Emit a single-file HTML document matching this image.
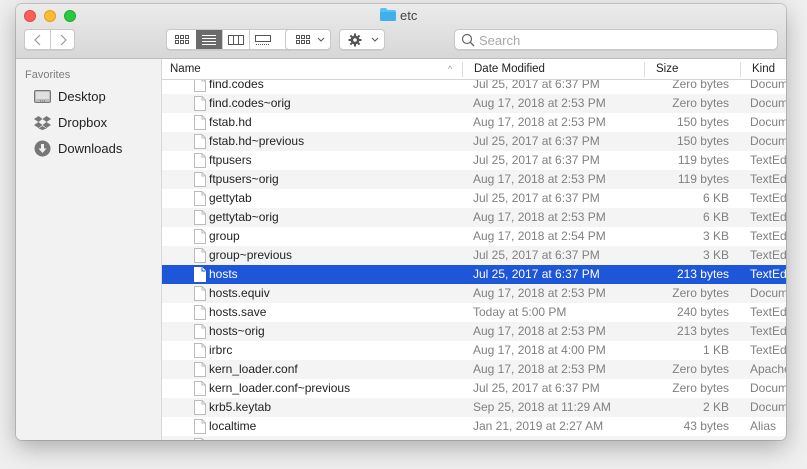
<!DOCTYPE html>
<html><head><meta charset="utf-8"><style>
*{margin:0;padding:0;box-sizing:border-box}
body{width:807px;height:469px;background:#efefef;font-family:"Liberation Sans",sans-serif;position:relative;overflow:hidden}
.win{position:absolute;left:16px;top:4px;width:770px;height:436px;border-radius:6px;background:#fff;overflow:hidden;box-shadow:0 8px 24px rgba(0,0,0,.28),0 0 0 1px rgba(0,0,0,.15)}
.tb{position:absolute;left:0;top:0;width:770px;height:55px;background:linear-gradient(#ebebeb,#d7d7d7);border-bottom:1px solid #bdbdbd}
.dot{position:absolute;top:6px;width:12px;height:12px;border-radius:50%}
.btn{position:absolute;top:25px;height:21px;background:#fff;border:1px solid #c8c8c8;border-radius:4px;box-shadow:0 1px 0 rgba(0,0,0,.05)}
.side{position:absolute;left:0;top:55px;width:146px;height:381px;background:#f2f2f2;border-right:1px solid #d8d8d8}
.side .h{position:absolute;left:9px;top:10px;font-size:11px;color:#7d7d7d}
.side .it{position:absolute;left:18px;font-size:13px;color:#222}
.list{position:absolute;left:146px;top:55px;width:624px;height:381px;overflow:hidden}
.hdr{position:absolute;left:0;top:0;width:624px;height:21px;background:#fff;border-bottom:1px solid #d5d5d5;font-size:11.5px;color:#222;z-index:2}
.hdr span{position:absolute;top:4px}
.hdr i{position:absolute;top:3px;width:1px;height:15px;background:#ddd}
.row{position:absolute;left:0;width:624px;height:19px;font-size:12px;color:#808080}
.row.g{background:#f4f4f4}
.row .n{position:absolute;left:47px;top:2px;color:#222}
.row .d{position:absolute;left:311px;top:2px}
.row .s{position:absolute;right:57px;top:2px}
.row .k{position:absolute;left:588px;top:2px;white-space:nowrap}
.row svg{position:absolute;left:32px;top:2px}
.row.sel{background:#1d56d9;color:#fff}
.row.sel .n{color:#fff}
</style></head><body>
<div class="win">
<div class="tb">
<div class="dot" style="left:8px;background:#fc5f57;border:1px solid #de4a42"></div>
<div class="dot" style="left:28px;background:#fdbc2e;border:1px solid #dea021"></div>
<div class="dot" style="left:48px;background:#28c840;border:1px solid #1ea932"></div>
<svg style="position:absolute;left:364px;top:4px" width="16" height="13"><path d="M0 2 Q0 0 2 0 H6 L7.5 2 H14 Q16 2 16 4 V11 Q16 13 14 13 H2 Q0 13 0 11Z" fill="#5ac0f0"/><rect x="0" y="4" width="16" height="9" rx="1.5" fill="#3fb0ea"/></svg>
<div style="position:absolute;left:384px;top:4px;font-size:13px;color:#444">etc</div>
<div class="btn" style="left:8px;width:51px"><div style="position:absolute;left:25px;top:0;width:1px;height:19px;background:#ccc"></div>
<svg style="position:absolute;left:8px;top:4px" width="10" height="12"><path d="M7 1 L2 6 L7 11" stroke="#9a9a9a" stroke-width="1.2" fill="none"/></svg>
<svg style="position:absolute;left:33px;top:4px" width="10" height="12"><path d="M3 1 L8 6 L3 11" stroke="#9a9a9a" stroke-width="1.2" fill="none"/></svg></div>
<div class="btn" style="left:150px;width:127px;overflow:hidden">
<div style="position:absolute;left:29px;top:0;width:26px;height:19px;background:#6b6b6b"></div>
<div style="position:absolute;left:55px;top:0;width:1px;height:19px;background:#ccc"></div>
<div style="position:absolute;left:82px;top:0;width:1px;height:19px;background:#ccc"></div>
<svg style="position:absolute;left:8px;top:5px" width="14" height="10" fill="none" stroke="#555" stroke-width="1"><rect x=".5" y=".5" width="3" height="3"/><rect x="5.5" y=".5" width="3" height="3"/><rect x="10.5" y=".5" width="3" height="3"/><rect x=".5" y="5.5" width="3" height="3"/><rect x="5.5" y="5.5" width="3" height="3"/><rect x="10.5" y="5.5" width="3" height="3"/></svg>
<svg style="position:absolute;left:35px;top:5px" width="14" height="10" stroke="#fff" stroke-width="1"><path d="M0 .5H14M0 3.5H14M0 6.5H14M0 9.5H14"/></svg>
<svg style="position:absolute;left:61px;top:5px" width="16" height="10" fill="none" stroke="#555"><rect x=".5" y=".5" width="15" height="9"/><path d="M5.5 0V10M10.5 0V10"/></svg>
<svg style="position:absolute;left:88px;top:5px" width="16" height="10" fill="none" stroke="#555"><rect x=".5" y=".5" width="15" height="6"/><path d="M1 9.5H15" stroke-dasharray="1 1"/></svg>
</div>
<div class="btn" style="left:269px;width:46px">
<svg style="position:absolute;left:10px;top:5px" width="14" height="10" fill="none" stroke="#555"><rect x=".5" y=".5" width="3" height="3"/><rect x="5.5" y=".5" width="3" height="3"/><rect x="10.5" y=".5" width="3" height="3"/><rect x=".5" y="5.5" width="3" height="3"/><rect x="5.5" y="5.5" width="3" height="3"/><rect x="10.5" y="5.5" width="3" height="3"/></svg>
<svg style="position:absolute;left:31px;top:7px" width="8" height="6"><path d="M1 1L4 4L7 1" stroke="#555" fill="none"/></svg></div>
<div class="btn" style="left:323px;width:46px">
<svg style="position:absolute;left:8px;top:3px" width="14" height="14" viewBox="0 0 14 14"><g fill="#555"><circle cx="7" cy="7" r="4.5"/><rect x="6" y="0.5" width="2" height="13"/><rect x="0.5" y="6" width="13" height="2"/><rect x="6" y="0.5" width="2" height="13" transform="rotate(45 7 7)"/><rect x="6" y="0.5" width="2" height="13" transform="rotate(-45 7 7)"/></g><circle cx="7" cy="7" r="1.8" fill="#fff"/></svg>
<svg style="position:absolute;left:31px;top:7px" width="8" height="6"><path d="M1 1L4 4L7 1" stroke="#555" fill="none"/></svg></div>
<div class="btn" style="left:438px;width:324px;border-radius:5px">
<svg style="position:absolute;left:6px;top:3px" width="14" height="14"><circle cx="6" cy="6" r="4.5" stroke="#666" stroke-width="1.2" fill="none"/><path d="M9.3 9.3L13 13" stroke="#666" stroke-width="1.4"/></svg>
<div style="position:absolute;left:24px;top:3px;font-size:13px;color:#a8a8a8">Search</div></div>
</div>
<div class="side">
<div class="h">Favorites</div>
<svg style="position:absolute;left:18px;top:31px" width="17" height="13"><rect x=".5" y=".5" width="16" height="12" rx="1.5" fill="#bbb" stroke="#777"/><rect x="2" y="2" width="13" height="7" fill="#e0e0e0"/><path d="M6 11H11" stroke="#666" stroke-dasharray="1 1"/></svg>
<div class="it" style="left:42px;top:30px">Desktop</div>
<svg style="position:absolute;left:18px;top:57px" width="17" height="14" viewBox="0 0 17 14" fill="#777"><path d="M4.5 0L0 3L4.5 6L8.5 3Z M12.5 0L8.5 3L12.5 6L17 3Z M4.5 6L0 9L4.5 12L8.5 9Z M12.5 6L8.5 9L12.5 12L17 9Z M4.5 12.5L8.5 14L12.5 12.5L8.5 10Z"/></svg>
<div class="it" style="left:42px;top:56px">Dropbox</div>
<svg style="position:absolute;left:18px;top:81px" width="17" height="17"><circle cx="8.5" cy="8.5" r="8" fill="#777"/><path d="M7 4H10V8.5H12.5L8.5 13L4.5 8.5H7Z" fill="#f2f2f2"/></svg>
<div class="it" style="left:42px;top:82px">Downloads</div>
</div>
<div class="list">
<div class="hdr"><span style="left:8px">Name</span><span style="left:286px;color:#999;font-size:9px;top:5px">^</span><i style="left:300px"></i><span style="left:312px">Date Modified</span><i style="left:482px"></i><span style="left:494px">Size</span><i style="left:578px"></i><span style="left:590px">Kind</span></div>
<div id="rows"></div>
</div>
</div>
<script>
var d=[["find.codes","Jul 25, 2017 at 6:37 PM","Zero bytes","Document"],
["find.codes~orig","Aug 17, 2018 at 2:53 PM","Zero bytes","Document"],
["fstab.hd","Aug 17, 2018 at 2:53 PM","150 bytes","Document"],
["fstab.hd~previous","Jul 25, 2017 at 6:37 PM","150 bytes","Document"],
["ftpusers","Jul 25, 2017 at 6:37 PM","119 bytes","TextEdit"],
["ftpusers~orig","Aug 17, 2018 at 2:53 PM","119 bytes","TextEdit"],
["gettytab","Jul 25, 2017 at 6:37 PM","6 KB","TextEdit"],
["gettytab~orig","Aug 17, 2018 at 2:53 PM","6 KB","TextEdit"],
["group","Aug 17, 2018 at 2:54 PM","3 KB","TextEdit"],
["group~previous","Jul 25, 2017 at 6:37 PM","3 KB","TextEdit"],
["hosts","Jul 25, 2017 at 6:37 PM","213 bytes","TextEdit"],
["hosts.equiv","Aug 17, 2018 at 2:53 PM","Zero bytes","Document"],
["hosts.save","Today at 5:00 PM","240 bytes","TextEdit"],
["hosts~orig","Aug 17, 2018 at 2:53 PM","213 bytes","TextEdit"],
["irbrc","Aug 17, 2018 at 4:00 PM","1 KB","TextEdit"],
["kern_loader.conf","Aug 17, 2018 at 2:53 PM","Zero bytes","Apache"],
["kern_loader.conf~previous","Jul 25, 2017 at 6:37 PM","Zero bytes","Document"],
["krb5.keytab","Sep 25, 2018 at 11:29 AM","2 KB","Document"],
["localtime","Jan 21, 2019 at 2:27 AM","43 bytes","Alias"],
["","","",""]];
var h="";
d.forEach(function(r,i){var top=19.5+19*i-4;var sel=i==10;
var st=sel?"#fff":"#bbb";
h+='<div class="row'+(i%2?' g':'')+(sel?' sel':'')+'" style="top:'+top+'px"><svg width="12" height="15"><path d="M.5 .5H8L11.5 4V14.5H.5Z" fill="#fff" stroke="'+st+'"/><path d="M8 .5V4H11.5" fill="none" stroke="'+(sel?'#1d56d9':'#bbb')+'"/></svg><span class="n">'+r[0]+'</span><span class="d">'+r[1]+'</span><span class="s">'+r[2]+'</span><span class="k">'+r[3]+'</span></div>';});
document.getElementById("rows").innerHTML=h;
</script>
</body></html>
